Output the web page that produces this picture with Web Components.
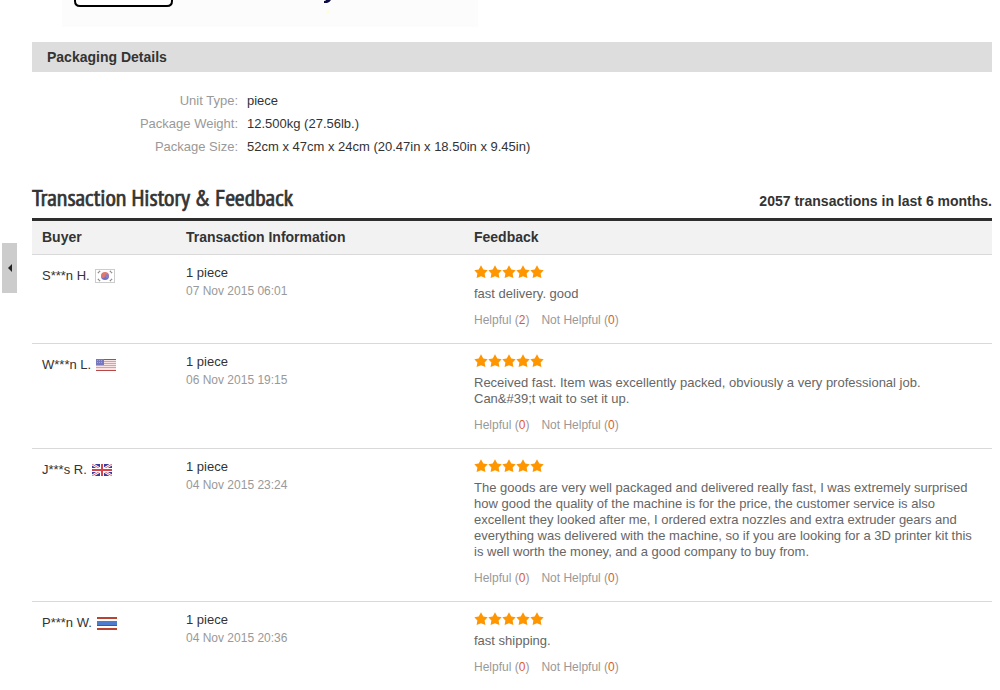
<!DOCTYPE html>
<html lang="en">
<head>
    <meta charset="UTF-8">
    <meta name="viewport" content="width=device-width, initial-scale=1.0">
    <title>Transaction History &amp; Feedback</title>
    <style>
        body {
            margin: 0;
            background: #fff;
            color: #333;
            font: 13px/18px "Liberation Sans", Arial, sans-serif;
        }
    </style>
</head>
<body>
    <product-page>
        <photo-strip></photo-strip>
        <detail-section heading="Packaging Details">
            <detail-item label="Unit Type:">piece</detail-item>
            <detail-item label="Package Weight:">12.500kg (27.56lb.)</detail-item>
            <detail-item label="Package Size:">52cm x 47cm x 24cm (20.47in x 18.50in x 9.45in)</detail-item>
        </detail-section>
        <section-title>
            Transaction History &amp; Feedback
            <span slot="aside">2057 transactions in last 6 months.</span>
        </section-title>
        <feedback-table></feedback-table>
    </product-page>
    <side-tab></side-tab>

    <script>
        class BaseElement extends HTMLElement {
            constructor() {
                super();
                this.attachShadow({ mode: 'open' });
            }
            connectedCallback() {
                this.shadowRoot.innerHTML = this.render();
            }
        }

        class ProductPage extends BaseElement {
            render() {
                return `
                    <style>
                        :host { display: block; padding: 0 8px 0 32px; }
                    </style>
                    <slot></slot>`;
            }
        }

        // lower edge of the last product photo
        class PhotoStrip extends BaseElement {
            render() {
                return `
                    <style>
                        :host { display: block; padding-left: 30px; margin-bottom: 15px; }
                        svg { display: block; background: #fcfcfc; }
                    </style>
                    <svg width="416" height="27" viewBox="0 0 416 27" aria-hidden="true">
                        <path d="M13 -4V1Q13 6 18 6H105Q110 6 110 1V-4" fill="#fff" stroke="#000" stroke-width="2"/>
                        <path d="M264 0H269Q267 3 265 3H262V1Q264 1 264 0Z" fill="#0b0b45"/>
                        <circle cx="266" cy="12" r="2" fill="#fffde0"/>
                    </svg>`;
            }
        }

        class DetailSection extends BaseElement {
            render() {
                return `
                    <style>
                        :host { display: block; }
                        h2 {
                            margin: 0;
                            padding: 0 15px;
                            background: #ddd;
                            font-size: 14px;
                            line-height: 30px;
                        }
                        .items {
                            display: grid;
                            gap: 5px;
                            padding: 20px 0;
                        }
                    </style>
                    <h2>${this.getAttribute('heading')}</h2>
                    <div class="items"><slot></slot></div>`;
            }
        }

        class DetailItem extends BaseElement {
            render() {
                return `
                    <style>
                        :host { display: grid; grid-template-columns: 206px 1fr; column-gap: 9px; }
                        .label { color: #999; text-align: right; }
                    </style>
                    <span class="label">${this.getAttribute('label')}</span>
                    <span><slot></slot></span>`;
            }
        }

        class SectionTitle extends BaseElement {
            render() {
                return `
                    <style>
                        :host {
                            display: flex;
                            justify-content: space-between;
                            align-items: baseline;
                            margin-top: 7px;
                            padding-bottom: 5px;
                            border-bottom: 3px solid #2e2e2e;
                        }
                        h2 {
                            margin: 0;
                            font: 24px/30px "PT Sans Narrow", "Open Sans Condensed", "Liberation Sans Narrow", "Arial Narrow", sans-serif;
                            -webkit-text-stroke: 0.7px;
                        }
                        .aside { font-size: 14px; font-weight: bold; }
                    </style>
                    <h2><slot></slot></h2>
                    <span class="aside"><slot name="aside"></slot></span>`;
            }
        }

        const flags = {
            kr: {
                name: 'South Korea',
                height: 14,
                art: `
                    <rect x=".5" y=".5" width="19" height="13" fill="#fff" stroke="#ccc"/>
                    <path d="M6 7a4 4 0 0 1 8 0z" fill="#e0796f"/>
                    <path d="M6 7a4 4 0 0 0 8 0z" fill="#6f74c4"/>
                    <circle cx="8" cy="7" r="2" fill="#e0796f"/>
                    <circle cx="12" cy="7" r="2" fill="#8b80c4"/>
                    <path d="M3 4l2-2M15 2l2 2M3 10l2 2M15 12l2-2" stroke="#888" stroke-width="1.6" stroke-dasharray="1.2 .5"/>`
            },
            us: {
                name: 'United States',
                height: 12,
                art: `
                    <rect width="20" height="12" fill="#f8e4e4"/>
                    <path d="M0 2.5H20M0 4.5H20M0 6.5H20M0 8.5H20" stroke="#e69a9c"/>
                    <path d="M0 .5H20M0 11.5H20" stroke="#b84848"/>
                    <rect width="8" height="6" fill="#7777bd"/>
                    <path d="M1 1.5H7M1 3.5H7" stroke="#a5a5dc" stroke-dasharray="1 1"/>`
            },
            gb: {
                name: 'United Kingdom',
                height: 12,
                art: `
                    <rect width="20" height="12" fill="#3b3b9c"/>
                    <path d="M0 0L20 12M20 0L0 12" stroke="#fff" stroke-width="2.6"/>
                    <path d="M0 0L20 12M20 0L0 12" stroke="#d65a64" stroke-width=".9"/>
                    <path d="M10 0V12M0 6H20" stroke="#fff" stroke-width="4"/>
                    <path d="M10 0V12M0 6H20" stroke="#d3444c" stroke-width="2"/>`
            },
            th: {
                name: 'Thailand',
                height: 13,
                art: `
                    <rect width="20" height="13" fill="#fff"/>
                    <path d="M0 1H20M0 12H20" stroke="#b8432f" stroke-width="2"/>
                    <rect y="4" width="20" height="5" fill="#4f7bcd"/>
                    <path d="M0 8.5H20" stroke="#345aa8"/>`
            }
        };

        class CountryFlag extends BaseElement {
            render() {
                const flag = flags[this.getAttribute('country')];
                return `
                    <style>
                        :host { display: inline-block; }
                        svg { display: block; }
                    </style>
                    <svg width="20" height="${flag.height}" viewBox="0 0 20 ${flag.height}" role="img" aria-label="${flag.name}">
                        ${flag.art}
                    </svg>`;
            }
        }

        class StarRating extends BaseElement {
            render() {
                const value = Number(this.getAttribute('value'));
                let stars = '';
                for (let i = 0; i < value; i++) {
                    stars += `<path transform="translate(${i * 14} 0)" d="M7 0.3L9.3 4.4L13.7 5.2L10.6 8.4L11.4 13L7 11.3L2.6 13L3.4 8.4L0.3 5.2L4.7 4.4Z"/>`;
                }
                return `
                    <style>
                        :host { display: flex; align-items: center; height: 18px; }
                        svg { fill: #ff9600; }
                    </style>
                    <svg width="70" height="14" viewBox="0 0 70 14" role="img" aria-label="${value} stars">${stars}</svg>`;
            }
        }

        class VoteButton extends BaseElement {
            render() {
                return `
                    <style>
                        :host { display: block; }
                        button {
                            display: block;
                            padding: 0;
                            border: 0;
                            background: none;
                            color: #999;
                            font: inherit;
                            cursor: pointer;
                        }
                        .count { color: #e0592a; }
                    </style>
                    <button type="button"><slot></slot> (<span class="count">${this.getAttribute('count')}</span>)</button>`;
            }
        }

        class FeedbackEntry extends BaseElement {
            render() {
                return `
                    <style>
                        :host { display: block; }
                        p { margin: 5px 0 10px; color: #666; line-height: 16px; }
                        .votes { display: flex; gap: 12px; font-size: 12px; line-height: 16px; }
                    </style>
                    <star-rating value="5"></star-rating>
                    <p><slot></slot></p>
                    <div class="votes">
                        <vote-button count="${this.getAttribute('helpful')}">Helpful</vote-button>
                        <vote-button count="${this.getAttribute('not-helpful')}">Not Helpful</vote-button>
                    </div>`;
            }
        }

        const rows = [
            { buyer: 'S***n H.', country: 'kr', date: '07 Nov 2015 06:01', helpful: 2, text: 'fast delivery. good' },
            { buyer: 'W***n L.', country: 'us', date: '06 Nov 2015 19:15', helpful: 0, text: 'Received fast. Item was excellently packed, obviously a very professional job.<br>Can&amp;#39;t wait to set it up.' },
            { buyer: 'J***s R.', country: 'gb', date: '04 Nov 2015 23:24', helpful: 0, text: 'The goods are very well packaged and delivered really fast, I was extremely surprised how good the quality of the machine is for the price, the customer service is also excellent they looked after me, I ordered extra nozzles and extra extruder gears and everything was delivered with the machine, so if you are looking for a 3D printer kit this is well worth the money, and a good company to buy from.' },
            { buyer: 'P***n W.', country: 'th', date: '04 Nov 2015 20:36', helpful: 0, text: 'fast shipping.' }
        ];

        class FeedbackTable extends BaseElement {
            render() {
                return `
                    <style>
                        :host { display: block; }
                        table { width: 100%; border-collapse: separate; border-spacing: 0; table-layout: fixed; }
                        .buyer-col { width: 15%; }
                        .info-col { width: 30%; }
                        th {
                            padding: 0 10px;
                            background: #f2f2f2;
                            border-bottom: 1px solid #d9d9d9;
                            font-size: 14px;
                            line-height: 33px;
                            text-align: left;
                        }
                        td {
                            padding: 8px 10px 15px;
                            border-bottom: 1px solid #d9d9d9;
                            vertical-align: top;
                        }
                        tr:last-child td { border-bottom: 0; }
                        .buyer { display: flex; align-items: center; gap: 5px; padding-top: 4px; }
                        .info { padding-top: 1px; }
                        .date { color: #999; font-size: 12px; }
                    </style>
                    <table>
                        <colgroup><col class="buyer-col"><col class="info-col"><col></colgroup>
                        <thead>
                            <tr><th>Buyer</th><th>Transaction Information</th><th>Feedback</th></tr>
                        </thead>
                        <tbody>
                            ${rows.map(row => `
                                <tr>
                                    <td><div class="buyer">${row.buyer}<country-flag country="${row.country}"></country-flag></div></td>
                                    <td>
                                        <div class="info">1 piece</div>
                                        <div class="date">${row.date}</div>
                                    </td>
                                    <td><feedback-entry helpful="${row.helpful}" not-helpful="0">${row.text}</feedback-entry></td>
                                </tr>`).join('')}
                        </tbody>
                    </table>`;
            }
        }

        // drawer handle that floats at the left edge of the window
        class SideTab extends BaseElement {
            render() {
                return `
                    <style>
                        :host { position: absolute; left: 2px; top: 243px; }
                        button {
                            display: flex;
                            align-items: center;
                            justify-content: center;
                            width: 15px;
                            height: 50px;
                            padding: 0;
                            border: 0;
                            background: #ccc;
                            cursor: pointer;
                        }
                    </style>
                    <button type="button" aria-label="Open panel">
                        <svg width="4" height="8" viewBox="0 0 4 8"><path d="M4 0V8L0 4Z" fill="#222"/></svg>
                    </button>`;
            }
        }

        customElements.define('product-page', ProductPage);
        customElements.define('photo-strip', PhotoStrip);
        customElements.define('detail-section', DetailSection);
        customElements.define('detail-item', DetailItem);
        customElements.define('section-title', SectionTitle);
        customElements.define('country-flag', CountryFlag);
        customElements.define('star-rating', StarRating);
        customElements.define('vote-button', VoteButton);
        customElements.define('feedback-entry', FeedbackEntry);
        customElements.define('feedback-table', FeedbackTable);
        customElements.define('side-tab', SideTab);
    </script>
</body>
</html>
